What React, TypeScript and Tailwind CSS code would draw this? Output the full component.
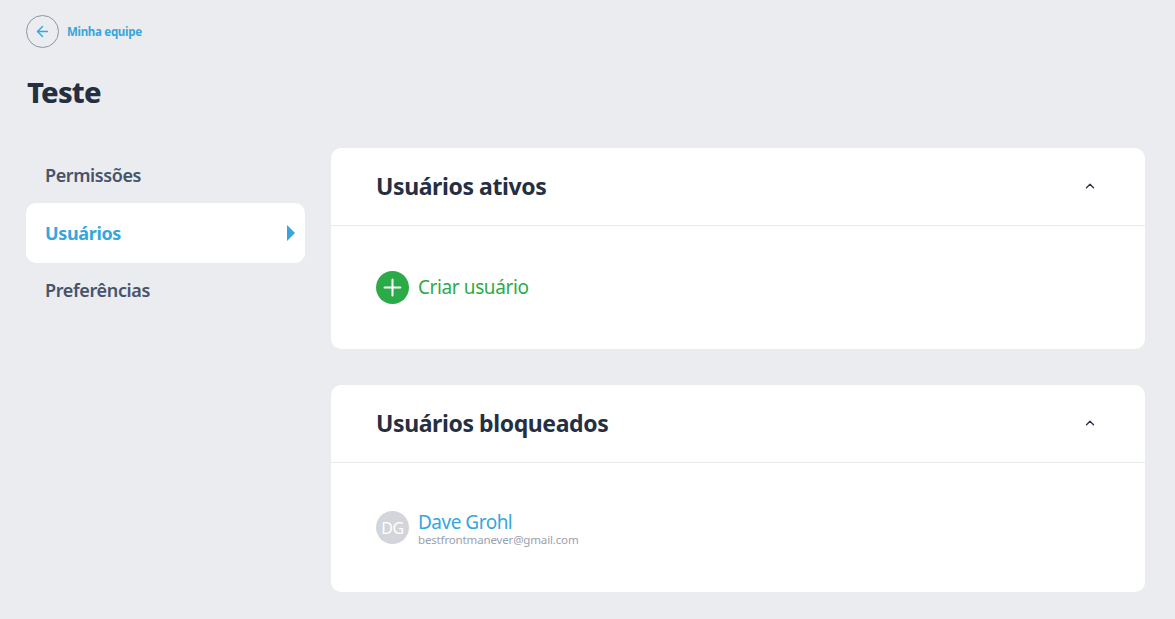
import { ArrowLeft, ChevronUp, Plus } from "lucide-react";

const font = { fontFamily: '"Noto Sans", "Lato", sans-serif' };

function CardHeader({ title }: { title: string }) {
  return (
    <div className="flex h-[78px] items-center justify-between border-b border-[#e9ebef] pb-[2px] pl-[46px] pr-[48px]">
      <h2 className="-ml-[1px] text-[23px] font-bold leading-[30px] tracking-[-0.4px] text-[#252f42]">{title}</h2>
      <ChevronUp className="h-[14px] w-[14px] text-[#252f42]" strokeWidth={2.25} />
    </div>
  );
}

export default function App() {
  return (
    <div className="h-[619px] w-[1175px] overflow-hidden bg-[#eaecf0] pl-[26px] pr-[30px] pt-[15px]" style={font}>
      <div className="flex items-center gap-2">
        <div className="flex h-[33px] w-[33px] items-center justify-center rounded-full border border-[#8d94a3]">
          <ArrowLeft className="h-[17px] w-[17px] text-[#36a6dc]" strokeWidth={2} />
        </div>
        <span className="text-[11.5px] font-bold tracking-[-0.3px] text-[#36a6dc]">Minha equipe</span>
      </div>
      <h1 className="mt-[25px] pl-[1px] text-[29px] font-extrabold leading-[38px] tracking-[-0.8px] text-[#252f42]">Teste</h1>
      <div className="mt-[37px] flex gap-[26px]">
        <nav className="w-[279px] pt-[7px]">
          <div className="flex h-[40px] items-center px-[19px] text-[18px] font-semibold tracking-[-0.4px] text-[#47536b]">Permissões</div>
          <div className="mt-[8px] flex h-[60px] items-center justify-between rounded-[10px] bg-white pl-[19px] pr-[10px] text-[18px] font-bold tracking-[-0.35px] text-[#36a6dc]">
            <span>Usuários</span>
            <span className="h-0 w-0 border-y-[8px] border-l-[8px] border-y-transparent border-l-[#36a6dc]" />
          </div>
          <div className="mt-[7px] flex h-[40px] items-center px-[19px] text-[18px] font-semibold tracking-[-0.35px] text-[#47536b]">Preferências</div>
        </nav>
        <main className="flex w-[814px] flex-col gap-[36px]">
          <section className="h-[201px] rounded-[10px] bg-white">
            <CardHeader title="Usuários ativos" />
            <div className="flex items-center gap-[9px] pl-[45px] pt-[45px]">
              <span className="flex h-[33px] w-[33px] items-center justify-center rounded-full bg-[#2bab47]">
                <Plus className="h-[27px] w-[27px] text-white" strokeWidth={1.8} />
              </span>
              <span className="text-[19px] tracking-[-0.4px] text-[#2bab47]">Criar usuário</span>
            </div>
          </section>
          <section className="h-[207px] rounded-[10px] bg-white">
            <CardHeader title="Usuários bloqueados" />
            <div className="flex items-start gap-[9px] pl-[45px] pt-[48px]">
              <span className="flex h-[33px] w-[33px] items-center justify-center rounded-full bg-[#d3d5da] text-[16px] tracking-[-0.3px] text-white">DG</span>
              <div className="mt-[1px] flex flex-col">
                <span className="text-[19px] leading-[21px] tracking-[-0.5px] text-[#36a6dc]">Dave Grohl</span>
                <span className="text-[11.5px] leading-[14px] tracking-[-0.15px] text-[#9aa1ae]">bestfrontmanever@gmail.com</span>
              </div>
            </div>
          </section>
        </main>
      </div>
    </div>
  );
}
